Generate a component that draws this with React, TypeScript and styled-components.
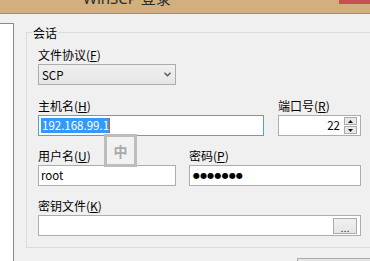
import React from 'react';
import styled, { createGlobalStyle } from 'styled-components';

const GlobalStyle = createGlobalStyle`
  html, body {
    margin: 0;
    padding: 0;
    background: #f0f0f0;
  }
  body {
    font-family: "Noto Sans CJK SC", "Liberation Sans", sans-serif;
    font-size: 12px;
    color: #000;
  }
`;

const Window = styled.div`
  position: relative;
  width: 370px;
  height: 261px;
  overflow: hidden;
  background: #f0f0f0;
  display: flex;
  flex-direction: column;
`;

const TitleBar = styled.div`
  flex: none;
  height: 13px;
  background: #d2b07e;
  border-bottom: 1px solid #a88d63;
  display: flex;
  align-items: flex-start;
  overflow: hidden;
`;

const TitleText = styled.span`
  margin: -10px 0 0 83px;
  font: 15px/17px "Noto Sans", "Noto Sans CJK SC", sans-serif;
  color: #2b2b2b;
  white-space: nowrap;
`;

const CloseButton = styled.div`
  margin-left: auto;
  width: 31px;
  height: 4px;
  background: #c75050;
`;

const Body = styled.div`
  flex: 1;
  display: flex;
  min-height: 0;
`;

const SidePanel = styled.div`
  flex: none;
  width: 13px;
  margin-top: 9px;
  background: #fff;
  border-top: 1px solid #8a8a8a;
  border-right: 1px solid #8a8a8a;
`;

const Main = styled.div`
  margin-left: 12px;
  padding-top: 18px;
  display: flex;
  flex-direction: column;
`;

const GroupBox = styled.div`
  position: relative;
  box-sizing: border-box;
  width: 360px;
  height: 216px;
  flex: none;
  border: 1px solid #dcdcdc;
  padding: 14px 0 0 11px;
  display: flex;
  flex-direction: column;
`;

const Legend = styled.span`
  position: absolute;
  top: -8px;
  left: 5px;
  padding: 0 1px;
  line-height: 15px;
  background: #f0f0f0;
`;

const Row = styled.div<{ $after?: number }>`
  display: flex;
  margin-bottom: ${(p) => p.$after ?? 12}px;
`;

const Field = styled.div<{ $width: number; $offset?: number }>`
  display: flex;
  flex-direction: column;
  width: ${(p) => p.$width}px;
  margin-left: ${(p) => p.$offset ?? 0}px;
`;

const Label = styled.label`
  height: 16px;
  line-height: 16px;
  margin-bottom: 1px;
  white-space: nowrap;
`;

const Key = styled.span`
  text-decoration: underline;
  text-underline-offset: 1px;
`;

const TextBox = styled.div<{ $focused?: boolean; $align?: string }>`
  box-sizing: border-box;
  height: 21px;
  border: 1px solid ${(p) => (p.$focused ? '#569de5' : '#abadb3')};
  background: #fff;
  display: flex;
  align-items: center;
  justify-content: ${(p) => p.$align ?? 'flex-start'};
  padding: 0 2px;
  font-size: 11.5px;
  line-height: 15px;
  white-space: nowrap;
`;

const Combo = styled.div`
  box-sizing: border-box;
  height: 21px;
  border: 1px solid #acacac;
  background: linear-gradient(#f0f0f0, #e5e5e5);
  display: flex;
  align-items: center;
  justify-content: space-between;
  padding: 0 4px 0 3px;
  font-size: 11.5px;
`;

const Selected = styled.span`
  background: #3399ff;
  color: #fff;
  padding: 0 0 0 1px;
  line-height: 15px;
`;

const Caret = styled.span`
  width: 1px;
  height: 15px;
  background: #cc6600;
`;

const PortValue = styled.span`
  margin-right: 4px;
`;

const Spin = styled.div`
  display: flex;
  flex-direction: column;
  gap: 1px;
  margin-right: 1px;
`;

const SpinButton = styled.div`
  box-sizing: border-box;
  width: 13px;
  height: 8px;
  border: 1px solid #acacac;
  background: #e8e8e8;
  display: flex;
  align-items: center;
  justify-content: center;
`;

const Dots = styled.span`
  font: 8px/15px "DejaVu Sans", sans-serif;
  letter-spacing: 0.2px;
  margin-left: 1px;
`;

const BrowseButton = styled.div`
  box-sizing: border-box;
  width: 24px;
  height: 16px;
  margin-left: auto;
  margin-right: 1px;
  border: 1px solid #acacac;
  background: linear-gradient(#f0f0f0, #e5e5e5);
  font: 11px/18px "Liberation Sans", sans-serif;
  text-align: center;
  color: #222;
`;

const DialogButton = styled.div`
  flex: none;
  box-sizing: border-box;
  width: 100px;
  height: 22px;
  margin: 10px 0 0 271px;
  border: 1px solid #acacac;
  background: #e5e5e5;
`;

const ImeBadge = styled.div`
  position: absolute;
  left: 104px;
  top: 134px;
  box-sizing: border-box;
  width: 33px;
  height: 33px;
  border: 3px solid #bdbdbd;
  background: #f2f2f2;
  color: #a9a9a9;
  font-size: 14px;
  font-weight: 700;
  display: flex;
  align-items: center;
  justify-content: center;
`;

const Chevron = () => (
  <svg width="7" height="5" viewBox="0 0 7 5">
    <path d="M0.5 0.8 L3.5 3.8 L6.5 0.8" fill="none" stroke="#555" strokeWidth="1.4" />
  </svg>
);

const Arrow = ({ up }: { up?: boolean }) => (
  <svg width="5" height="3" viewBox="0 0 5 3">
    <path d={up ? 'M0 3 L2.5 0 L5 3 Z' : 'M0 0 L2.5 3 L5 0 Z'} fill="#111" />
  </svg>
);

export default function App() {
  return (
    <Window>
      <GlobalStyle />
      <TitleBar>
        <TitleText>WinSCP 登录</TitleText>
        <CloseButton />
      </TitleBar>
      <Body>
        <SidePanel />
        <Main>
          <GroupBox>
            <Legend>会话</Legend>
            <Row $after={13}>
              <Field $width={138}>
                <Label>文件协议(<Key>F</Key>)</Label>
                <Combo>
                  <span>SCP</span>
                  <Chevron />
                </Combo>
              </Field>
            </Row>
            <Row>
              <Field $width={226}>
                <Label>主机名(<Key>H</Key>)</Label>
                <TextBox $focused>
                  <Selected>192.168.99.1</Selected>
                  <Caret />
                </TextBox>
              </Field>
              <Field $width={83} $offset={14}>
                <Label>端口号(<Key>R</Key>)</Label>
                <TextBox $align="flex-end">
                  <PortValue>22</PortValue>
                  <Spin>
                    <SpinButton><Arrow up /></SpinButton>
                    <SpinButton><Arrow /></SpinButton>
                  </Spin>
                </TextBox>
              </Field>
            </Row>
            <Row>
              <Field $width={138}>
                <Label>用户名(<Key>U</Key>)</Label>
                <TextBox>root</TextBox>
              </Field>
              <Field $width={172} $offset={13}>
                <Label>密码(<Key>P</Key>)</Label>
                <TextBox>
                  <Dots>●●●●●●●</Dots>
                </TextBox>
              </Field>
            </Row>
            <Row>
              <Field $width={323}>
                <Label>密钥文件(<Key>K</Key>)</Label>
                <TextBox>
                  <BrowseButton>...</BrowseButton>
                </TextBox>
              </Field>
            </Row>
          </GroupBox>
          <DialogButton />
        </Main>
      </Body>
      <ImeBadge>中</ImeBadge>
    </Window>
  );
}
